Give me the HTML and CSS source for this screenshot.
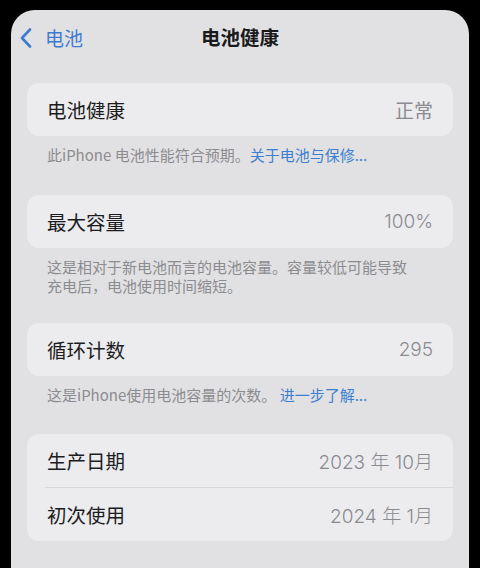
FILE: index.html
```html
<!DOCTYPE html>
<html lang="zh-CN">
<head>
<meta charset="utf-8">
<title>电池健康</title>
<link rel="stylesheet" href="styles.css">
</head>
<body>
<div class="screen">
  <div class="nav">
    <div class="back">
      <svg class="chev" viewBox="0 0 12 20" width="12" height="20"><path d="M10 1.5 L2 10 L10 18.5" fill="none" stroke="#3e7bd0" stroke-width="2.6" stroke-linecap="round" stroke-linejoin="round"/></svg>
      <span class="back-text">电池</span>
    </div>
    <div class="title">电池健康</div>
  </div>

  <div class="card">
    <div class="row"><span class="label">电池健康</span><span class="value">正常</span></div>
  </div>
  <div class="note">此iPhone 电池性能符合预期。<span class="link">关于电池与保修...</span></div>

  <div class="card gap2">
    <div class="row"><span class="label">最大容量</span><span class="value num">100%</span></div>
  </div>
  <div class="note">这是相对于新电池而言的电池容量。容量较低可能导致<br>充电后，电池使用时间缩短。</div>

  <div class="card gap3">
    <div class="row"><span class="label">循环计数</span><span class="value num">295</span></div>
  </div>
  <div class="note">这是iPhone使用电池容量的次数。 <span class="link">进一步了解...</span></div>

  <div class="card gap4">
    <div class="row"><span class="label">生产日期</span><span class="value num">2023 年 10月</span></div>
    <div class="divider"></div>
    <div class="row"><span class="label">初次使用</span><span class="value num">2024 年 1月</span></div>
  </div>
</div>
</body>
</html>
```

FILE: styles.css
```css
html, body {
  margin: 0;
  padding: 0;
  background: #000;
  width: 480px;
  height: 568px;
  overflow: hidden;
}
body {
  font-family: "Noto Sans CJK SC", "Noto Sans", sans-serif;
}
.screen {
  margin: 10px 0 0 11px;
  width: 458px;
  height: 558px;
  box-sizing: border-box;
  padding: 0 16px;
  background: #e1e1e3;
  border-radius: 24px 24px 0 0;
}
.nav {
  position: relative;
  height: 54px;
  display: flex;
  align-items: center;
  justify-content: center;
}
.back {
  position: absolute;
  left: -7px;
  top: 17px;
  display: flex;
  align-items: center;
  gap: 13px;
}
.chev { display: block; }
.back-text {
  color: #3e7bd0;
  font-size: 19px;
  line-height: 22px;
}
.title {
  font-size: 19.5px;
  font-weight: 700;
  color: #1a1a1c;
  margin-top: 0;
  line-height: 22px;
}
.card {
  margin-top: 19px;
  background: #ececee;
  border-radius: 12px;
}
.gap2 { margin-top: 31px; }
.gap3 { margin-top: 28px; }
.gap4 { margin-top: 30px; }
.row {
  height: 53px;
  display: flex;
  align-items: center;
  justify-content: space-between;
  padding: 0 20px;
}
.label {
  font-size: 19.5px;
  color: #1c1c1e;
}
.value {
  font-size: 19px;
  color: #8a8a8e;
}
.num {
  font-family: "Inter", "Noto Sans CJK SC", sans-serif;
  font-weight: 300;
}
.divider {
  height: 1px;
  background: #d8d8da;
  margin-left: 18px;
}
.note {
  padding: 9px 20px 0 20px;
  font-size: 15px;
  line-height: 19px;
  color: #8c8c90;
}
.link {
  color: #3d7fcf;
}
```
